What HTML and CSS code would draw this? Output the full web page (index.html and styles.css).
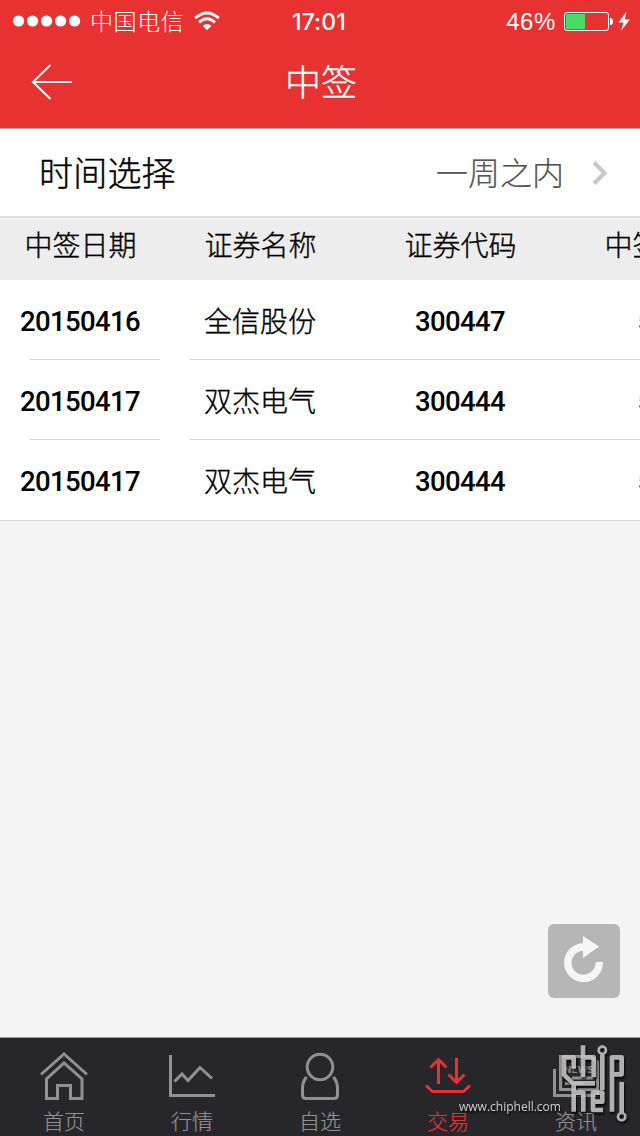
FILE: index.html
```html
<!DOCTYPE html>
<html lang="zh-CN">
<head>
<meta charset="utf-8">
<title>中签</title>
<link rel="stylesheet" href="styles.css">
</head>
<body>
<div class="app">
  <header class="top">
    <div class="status">
      <div class="status-left">
        <svg class="signal" width="68" height="12" viewBox="0 0 68 12"><g fill="#fff"><circle cx="5.6" cy="6" r="5.6"/><circle cx="19.6" cy="6" r="5.6"/><circle cx="33.6" cy="6" r="5.6"/><circle cx="47.6" cy="6" r="5.6"/><circle cx="61.6" cy="6" r="5.6"/></g></svg>
        <span class="carrier">中国电信</span>
        <svg class="wifi" width="26" height="20" viewBox="0 0 26 20"><g fill="none" stroke="#fff" stroke-width="2.9"><path d="M1.2 7.2Q13-3.2 24.8 7.2"/><path d="M5 11.3Q13 4.3 21 11.3"/></g><path d="M8.6 14.8Q13 11 17.4 14.8L13 19.2Z" fill="#fff"/></svg>
      </div>
      <span class="clock">17:01</span>
      <div class="status-right">
        <span class="percent">46%</span>
        <svg class="battery" width="68" height="22" viewBox="0 0 68 22"><rect x=".5" y="1.5" width="44" height="18" rx="2.5" fill="none" stroke="#fff"/><rect x="2" y="3" width="19" height="15" fill="#4cd964"/><path d="M46 7q3 0 3 3.5t-3 3.500Z" fill="#fff"/><path d="M62.500 0.500L54.500 11.500H59.500L57 20L65.800 8.500H60.800Z" fill="#fff"/></svg>
      </div>
    </div>
    <div class="nav">
      <svg class="back" width="42" height="38" viewBox="0 0 42 38"><path d="M19.500 2L2 19L19.500 36M2 19H41" fill="none" stroke="#fff" stroke-width="2"/></svg>
      <h1 class="title">中签</h1>
    </div>
  </header>
  <div class="picker">
    <span class="picker-label">时间选择</span>
    <span class="picker-value">一周之内</span>
    <svg class="chevron" width="16" height="26" viewBox="0 0 16 26"><path d="M2 2.500L12.500 13L2 23.500" fill="none" stroke="#c8c8c8" stroke-width="4"/></svg>
  </div>
  <div class="table">
    <div class="row head"><span>中签日期</span><span>证券名称</span><span>证券代码</span><span>中签数量</span></div>
    <div class="row"><span class="num">20150416</span><span>全信股份</span><span class="num">300447</span><span class="num">500</span></div>
    <div class="row"><span class="num">20150417</span><span>双杰电气</span><span class="num">300444</span><span class="num">500</span></div>
    <div class="row"><span class="num">20150417</span><span>双杰电气</span><span class="num">300444</span><span class="num">500</span></div>
  </div>
  <main class="blank"></main>
  <nav class="tabs">
    <div class="tab"><svg width="52" height="52" viewBox="0 0 52 52"><g fill="none" stroke="currentColor" stroke-width="3"><path d="M3 24.500L26 4L49 24.500"/><path d="M8.500 48.500V29L26 13L44 29V48.500H32.500V35.500H19.500V48.500Z"/></g></svg><span>首页</span></div>
    <div class="tab"><svg width="52" height="52" viewBox="0 0 52 52"><path d="M4.500 5V45.500H49M8.500 31.500L16 24L22 30.500L34 17.500L46 28.500" fill="none" stroke="currentColor" stroke-width="3"/></svg><span>行情</span></div>
    <div class="tab"><svg width="52" height="52" viewBox="0 0 52 52"><g fill="none" stroke="currentColor" stroke-width="3"><circle cx="26" cy="17" r="12.800"/><path d="M12.500 27Q8.500 32 8.500 38V45Q8.500 48.500 12 48.500H40Q43.500 48.500 43.500 45V38Q43.500 32 39.500 27"/></g></svg><span>自选</span></div>
    <div class="tab active"><svg width="52" height="52" viewBox="0 0 52 52"><path d="M16.500 34V10M8.500 17.500L16.500 9.500L24.500 17.500M34.500 8V32M26.500 24.500L34.500 32.500L42.500 24.500M4 35.500L10.500 41.500H41.500L48 35.500" fill="none" stroke="currentColor" stroke-width="3"/></svg><span>交易</span></div>
    <div class="tab"><svg width="52" height="52" viewBox="0 0 52 52"><g fill="none" stroke="currentColor" stroke-width="3"><path d="M4.500 19V45.500H47.500V12L40 6.500H10.500V39.500H47.500"/><path d="M15 33.500H34M22 28H44"/></g><text x="14" y="22.500" textLength="30" lengthAdjust="spacingAndGlyphs" class="news">NEWS</text></svg><span>资讯</span></div>
  </nav>
  <button class="refresh" aria-label="刷新"><svg width="72" height="74" viewBox="0 0 72 74"><path d="M51.200 38A15.700 15.700 0 1 1 35.500 23" fill="none" stroke="#f6f6f6" stroke-width="7.400"/><path d="M35 12L51 22.500L35 34Z" fill="#f6f6f6"/></svg></button>
  <div class="watermark">
    <span class="site">www.chiphell.com</span>
    <svg class="logo" width="95" height="100" viewBox="0 0 285 300"><g fill="none" stroke="#c4c4c4" stroke-width="14" stroke-linejoin="round"><path d="M86 98V64H57V116L84 142H150M114 28V124M114 64H146V124M172 56V162M201 227V64H230V115H201M86 142V227M86 170H115V227M174 222H144V170H172V197H144M230 138V230"/><circle cx="172" cy="43" r="11" stroke-width="8"/><circle cx="230" cy="242" r="11" stroke-width="8"/></g></svg>
  </div>
</div>
</body>
</html>
```
FILE: styles.css
```css
* { box-sizing: border-box; }
body { margin: 0; }
.app {
  position: relative;
  width: 640px;
  height: 1136px;
  overflow: hidden;
  display: flex;
  flex-direction: column;
  background: #f4f4f4;
  color: #000;
  font-family: "Noto Sans CJK SC", sans-serif;
  font-weight: 300;
}
.top { height: 129px; background: #e83131; border-bottom: 1px solid #aaa; color: #fff; }
.status { height: 40px; display: grid; grid-template-columns: 279px 1fr auto; align-items: center; padding: 0 8px 0 13px; }
.status-left, .status-right { display: flex; align-items: center; }
.status-right { justify-content: flex-end; }
.carrier { font-size: 23px; line-height: 38px; padding-bottom: 2px; letter-spacing: 0.6px; margin: 0 10px 0 9px; }
.clock { font: 500 23px/40px Inter, sans-serif; padding-top: 1px; letter-spacing: 0.1px; }
.percent { font: 400 24px/40px "Liberation Sans", sans-serif; padding-top: 2px; letter-spacing: 0.6px; margin-right: 8px; }
.battery { margin-top: 1px; }
.nav { height: 84px; display: grid; grid-template-columns: 98px 1fr 98px; align-items: center; }
.back { margin-left: 31px; }
.title { margin: 0; font-size: 36px; line-height: 76px; padding-bottom: 4px; font-weight: 300; text-align: center; padding-left: 2px; -webkit-text-stroke: 0.3px; }
.picker { flex: none; height: 89px; display: flex; align-items: center; padding: 0 32px 0 39px; background: #fff; border-bottom: 2px solid #e2e2e2; }
.picker-label { font-size: 34px; flex: 1; padding-bottom: 2px; letter-spacing: 0.2px; -webkit-text-stroke: 0.4px; }
.picker-value { font-size: 32px; color: #555; margin-right: 28px; padding-bottom: 3px; -webkit-text-stroke: 0.2px; }
.table { width: 760px; background: #fff; border-top: 2px solid #f1f1f1; border-bottom: 1px solid #d8d8d8; }
.row { height: 80px; display: grid; grid-template-columns: 160px 200px 200px 200px; align-items: center; text-align: center; font-size: 28px; line-height: 80px; -webkit-text-stroke: 0.35px; }
.head { height: 60px; line-height: 49px; background: #ededed; align-items: start; }
.head span { padding-left: 1px; }
.row span { position: relative; }
.row:not(.head):not(:last-child) span::after { content: ""; position: absolute; left: 0; right: 0; bottom: 0; height: 1px; background: #d4d4d4; }
.row:not(.head) span:nth-child(-n+2)::after { left: 30px; }
.num { font: 500 27.5px/76px Roboto, sans-serif; padding-top: 4px; letter-spacing: -0.6px; -webkit-text-stroke: 0; }
.blank { flex: 1; }
.tabs { height: 99px; display: grid; grid-template-columns: repeat(5, 1fr); background: #27262b; border-top: 1px solid #999; color: #919191; }
.tab { display: flex; flex-direction: column; align-items: center; padding-top: 12px; }
.tab span { font-size: 21px; line-height: 36px; -webkit-text-stroke: 0.2px; }
.active { color: #e83131; }
.news { font: 700 9px "DejaVu Sans", sans-serif; fill: currentColor; }
.refresh { position: absolute; left: 548px; top: 924px; width: 72px; height: 74px; padding: 0; border: 0; border-radius: 6px; background: #b6b6b6; }
.refresh svg { display: block; }
.watermark { position: absolute; left: 459px; top: 1036px; width: 181px; height: 100px; filter: drop-shadow(1px 2px 1px #000); opacity: .88; }
.site { position: absolute; left: 0; top: 62px; font: 500 12px/18px "Open Sans", sans-serif; color: #e4e4e4; }
.logo { position: absolute; left: 86px; top: 0; }
```
